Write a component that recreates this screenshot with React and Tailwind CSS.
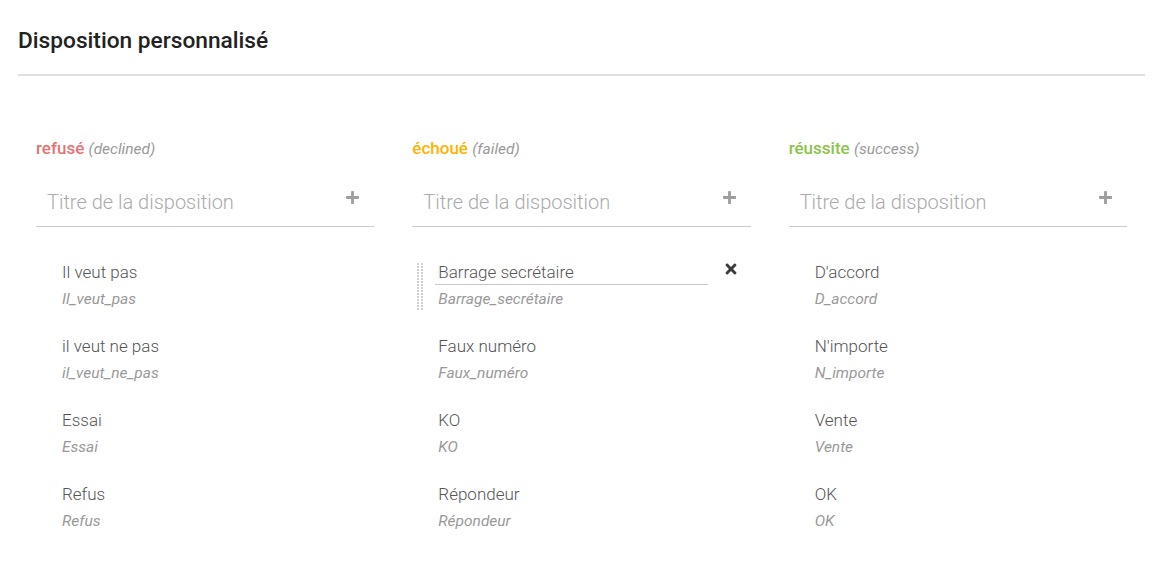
import React from 'react';
import { FaPlus, FaTimes } from 'react-icons/fa';

const columns = [
  {
    label: 'refusé',
    hint: '(declined)',
    color: 'text-[#e57373]',
    items: [
      ['Il veut pas', 'Il_veut_pas'],
      ['il veut ne pas', 'il_veut_ne_pas'],
      ['Essai', 'Essai'],
      ['Refus', 'Refus'],
    ],
  },
  {
    label: 'échoué',
    hint: '(failed)',
    color: 'text-[#ffb300]',
    items: [
      ['Barrage secrétaire', 'Barrage_secrétaire', true],
      ['Faux numéro', 'Faux_numéro'],
      ['KO', 'KO'],
      ['Répondeur', 'Répondeur'],
    ],
  },
  {
    label: 'réussite',
    hint: '(success)',
    color: 'text-[#8bc34a]',
    items: [
      ["D'accord", 'D_accord'],
      ["N'importe", 'N_importe'],
      ['Vente', 'Vente'],
      ['OK', 'OK'],
    ],
  },
];

function DragHandle() {
  const dots = [];
  for (let r = 0; r < 16; r++) {
    dots.push(<rect key={'a' + r} x="0" y={r * 3} width="2" height="2" />);
    dots.push(<rect key={'b' + r} x="4" y={r * 3} width="2" height="2" />);
  }
  return (
    <svg width="6" height="47" className="fill-[#cfcfcf]">
      {dots}
    </svg>
  );
}

function Item({ title, slug, editing }) {
  if (editing) {
    return (
      <div className="relative pl-[26px]">
        <div className="absolute left-[5px] top-[3px]">
          <DragHandle />
        </div>
        <div className="flex items-start">
          <div className="w-[273px] -ml-[3px] pl-[3px] border-b border-[#c8c8c8] text-[17px] leading-[24px] font-light text-[#555]">
            {title}
          </div>
          <FaTimes className="ml-[15px] mt-[1px] text-[#3a3a3a]" size={16} />
        </div>
        <div className="mt-[5px] text-[15.5px] leading-[18px] italic text-[#999]">{slug}</div>
      </div>
    );
  }
  return (
    <div className="pl-[26px]">
      <div className="text-[17px] leading-[24px] font-light text-[#555]">{title}</div>
      <div className="mt-[6px] text-[15.5px] leading-[18px] italic text-[#999]">{slug}</div>
    </div>
  );
}

export default function App() {
  return (
    <div className="min-h-screen bg-white font-['Roboto',sans-serif] pt-[27px] px-[18px] w-[1163px]">
      <h2 className="text-[22.7px] leading-[28px] font-medium text-[#222]">Disposition personnalisé</h2>
      <div className="mt-[19px] h-[2px] bg-[#e0e0e0]" />

      <div className="grid grid-cols-3 gap-x-[38px] ml-[18px] w-[1091px] mt-[62px]">
        {columns.map((col) => (
          <div key={col.label}>
            <div className="text-[17px] leading-[20px]">
              <span className={`font-medium ${col.color}`}>{col.label}</span>{' '}
              <span className="italic text-[15.5px] text-[#999]">{col.hint}</span>
            </div>

            <div className="mt-[29px] flex items-start justify-between border-b border-[#cccccc] pb-[10px] pl-[11px] pr-[14px]">
              <span className="text-[20px] leading-[28px] font-light text-[#aaa]">Titre de la disposition</span>
              <FaPlus className="mt-[2px] text-[#9e9e9e]" size={15} />
            </div>

            <div className="mt-[33px] flex flex-col gap-[26px]">
              {col.items.map(([t, s, e]) => (
                <Item key={s} title={t} slug={s} editing={e} />
              ))}
            </div>
          </div>
        ))}
      </div>
    </div>
  );
}
